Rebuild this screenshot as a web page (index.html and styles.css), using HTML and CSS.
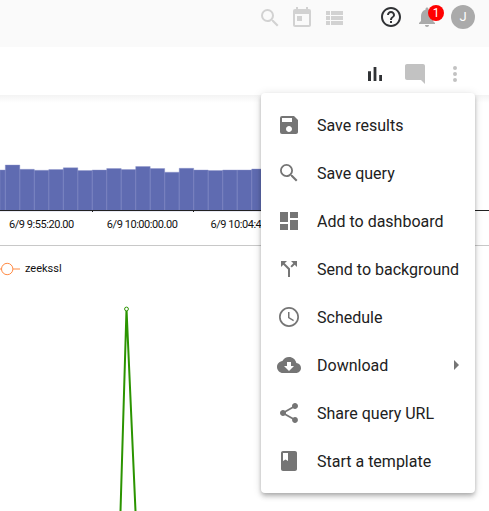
FILE: index.html
```html
<!DOCTYPE html>
<html lang="en">
<head>
<meta charset="utf-8">
<title>Query results</title>
<link rel="stylesheet" href="styles.css">
</head>
<body>
<header class="topbar">
  <svg class="icon faint" viewBox="0 0 24 24"><path d="M15.500 14h-.79l-.28-.27A6.471 6.471 0 0 0 16 9.500 6.500 6.500 0 1 0 9.500 16c1.610 0 3.090-.59 4.230-1.570l.27.28v.79l5 4.990L20.490 19zm-6 0a4.500 4.500 0 1 1 0-9 4.500 4.500 0 0 1 0 9z"/></svg>
  <svg class="icon faint cal" viewBox="0 0 24 24"><path d="M19 3h-1V1h-2v2H8V1H6v2H5a2 2 0 0 0-2 2v14c0 1.100.9 2 2 2h14c1.100 0 2-.9 2-2V5a2 2 0 0 0-2-2zm0 16H5V8h14zM7 10h5v5H7z"/></svg>
  <svg class="icon faint list" viewBox="0 0 24 24"><path d="M4 5h4v4H4zM9 5h12v4H9zM4 10h4v4H4zM9 10h12v4H9zM4 15h4v4H4zM9 15h12v4H9z"/></svg>
  <svg class="icon dark help" viewBox="0 0 24 24"><path d="M11 18h2v-2h-2v2zm1-16C6.480 2 2 6.480 2 12s4.480 10 10 10 10-4.480 10-10S17.520 2 12 2zm0 18c-4.410 0-8-3.590-8-8s3.590-8 8-8 8 3.590 8 8-3.590 8-8 8zm0-14c-2.210 0-4 1.790-4 4h2c0-1.100.9-2 2-2s2 .9 2 2c0 2-3 1.750-3 5h2c0-2.250 3-2.500 3-5 0-2.210-1.790-4-4-4z"/></svg>
  <div class="bell">
    <svg class="icon muted" viewBox="0 0 24 24"><path d="M12 22c1.100 0 2-.9 2-2h-4c0 1.100.89 2 2 2zm6-6v-5c0-3.070-1.640-5.640-4.500-6.320V4c0-.83-.67-1.500-1.500-1.500s-1.500.67-1.500 1.500v.68C7.630 5.360 6 7.920 6 11v5l-2 2v1h16v-1z"/></svg>
    <span class="badge">1</span>
  </div>
  <div class="avatar">J</div>
</header>
<nav class="toolbar">
  <svg class="icon dark" viewBox="0 0 24 24"><path d="M5 9.200h3V19H5zM10.600 5h2.800v14h-2.800zm5.600 8H19v6h-2.800z"/></svg>
  <svg class="icon comment" viewBox="0 0 24 24"><path d="M22 4c0-1.100-.9-2-2-2H4c-1.100 0-2 .9-2 2v12c0 1.100.9 2 2 2h14l4 4z"/></svg>
  <svg class="icon more" viewBox="0 0 24 24"><path d="M12 8a2 2 0 1 0 0-4 2 2 0 0 0 0 4zm0 2a2 2 0 1 0 0 4 2 2 0 0 0 0-4zm0 6a2 2 0 1 0 0 4 2 2 0 0 0 0-4z"/></svg>
</nav>
<main>
  <section class="timeline">
    <svg class="bars" viewBox="0 0 489 57">
      <g class="bar">
        <path d="M0 15h5.300v41H0zM5.300 10h14.500v46H5.300zM19.800 14.300h14.500V56H19.800zM34.300 15.300h14.500V56H34.300zM48.800 14.500h14.500V56H48.800zM63.300 12.800h14.500V56H63.300zM77.800 15.500h14.500V56H77.800zM92.200 15h14.500v41H92.200zM106.700 13.500h14.500V56h-14.500zM121.200 14.500h14.500V56h-14.500zM135.700 11.500h14.500V56h-14.500zM150.200 13.500h14.500V56h-14.500zM164.700 17.200h14.500V56h-14.500zM179.200 13.300h14.500V56h-14.500zM193.700 15h14.500v41h-14.500zM208.200 15.500h14.500V56h-14.500zM222.700 15h14.500v41h-14.500zM237.200 15h14.500v41h-14.500zM251.700 14h14.500v42h-14.500z"/>
      </g>
      <path class="axis" d="M0 55.500h489M92.500 56v1.500M193.500 56v1.500"/>
    </svg>
    <div class="ticks"><span>6/9 9:55:20.00</span><span>6/9 10:00:00.00</span><span>6/9 10:04:40.00</span></div>
  </section>
  <section class="series">
    <div class="legend">
      <svg class="marker" viewBox="0 0 20 14"><path d="M0 7h1.500M13 7h7"/><circle cx="7.200" cy="7" r="5.700"/></svg>
      <span>zeekssl</span>
    </div>
    <svg class="plot" viewBox="0 0 489 211"><path d="M120.500 211L126.500 9l9 202"/><circle cx="126.500" cy="9" r="1.900"/></svg>
  </section>
</main>
<ul class="menu">
  <li><svg class="icon" viewBox="0 0 24 24"><path d="M17 3H5a2 2 0 0 0-2 2v14a2 2 0 0 0 2 2h14c1.100 0 2-.9 2-2V7zm-5 16c-1.660 0-3-1.340-3-3s1.340-3 3-3 3 1.340 3 3-1.340 3-3 3zm3-10H5V5h10z"/></svg>Save results</li>
  <li><svg class="icon" viewBox="0 0 24 24"><path d="M15.500 14h-.79l-.28-.27A6.471 6.471 0 0 0 16 9.500 6.500 6.500 0 1 0 9.500 16c1.610 0 3.090-.59 4.230-1.570l.27.28v.79l5 4.990L20.490 19zm-6 .2a4.700 4.700 0 1 1 0-9.400 4.700 4.700 0 0 1 0 9.400z"/></svg>Save query</li>
  <li><svg class="icon" viewBox="0 0 24 24"><path d="M3 13h8V3H3zm0 8h8v-6H3zm10 0h8V11h-8zm0-18v6h8V3z"/></svg>Add to dashboard</li>
  <li><svg class="icon" viewBox="0 0 24 24"><path d="M14 4l2.290 2.290-2.880 2.880 1.420 1.420 2.880-2.880L20 10V4zM10 4H4v6l2.290-2.290 4.710 4.700V20h2v-8.410l-5.290-5.300z"/></svg>Send to background</li>
  <li><svg class="icon" viewBox="0 0 24 24"><path d="M11.990 2C6.470 2 2 6.480 2 12s4.470 10 9.990 10C17.520 22 22 17.520 22 12S17.520 2 11.990 2zM12 20.300a8.300 8.300 0 1 1 0-16.600 8.300 8.300 0 0 1 0 16.600zM12.500 7H11v6l5.250 3.150.75-1.230-4.500-2.670z"/></svg>Schedule</li>
  <li><svg class="icon" viewBox="0 0 24 24"><path d="M19.350 10.040C18.670 6.590 15.640 4 12 4 9.110 4 6.600 5.640 5.350 8.040 2.340 8.360 0 10.910 0 14c0 3.310 2.690 6 6 6h13c2.760 0 5-2.240 5-5 0-2.640-2.050-4.780-4.650-4.960zM17 13l-5 5-5-5h3V9h4v4z"/></svg>Download<i class="arrow"></i></li>
  <li><svg class="icon" viewBox="0 0 24 24"><path d="M18 16.080c-.76 0-1.440.3-1.960.77L8.910 12.700c.05-.23.09-.46.09-.7s-.04-.47-.09-.7l7.050-4.110c.54.5 1.250.81 2.040.81 1.660 0 3-1.340 3-3s-1.340-3-3-3-3 1.340-3 3c0 .24.04.47.09.7L8.040 9.810C7.500 9.310 6.790 9 6 9c-1.660 0-3 1.340-3 3s1.340 3 3 3c.79 0 1.500-.31 2.040-.81l7.120 4.160c-.05.21-.08.43-.08.65 0 1.610 1.310 2.920 2.920 2.920s2.920-1.310 2.920-2.920-1.310-2.920-2.920-2.920z"/></svg>Share query URL</li>
  <li><svg class="icon" viewBox="0 0 24 24"><path d="M18 2H6c-1.100 0-2 .9-2 2v16c0 1.100.9 2 2 2h12c1.100 0 2-.9 2-2V4c0-1.100-.9-2-2-2zM6 4h5v8l-2.500-1.500L6 12z"/></svg>Start a template</li>
</ul>
</body>
</html>
```
FILE: styles.css
```css
* { box-sizing: border-box; }
body {
  margin: 0;
  height: 511px;
  overflow: hidden;
  position: relative;
  background: #fff;
  color: #212121;
  font-family: Roboto, sans-serif;
}
svg { display: block; }
.icon { width: 24px; height: 24px; flex: none; fill: #757575; }
.icon.dark { fill: #303235; }
.icon.faint { fill: #d2d2d2; margin-top: 2px; }
.icon.muted { fill: #aaa; }
.icon.comment, .icon.more { margin-left: 16px; fill: #c2c2c2; }

.topbar {
  height: 47px;
  padding: 0 14px 13px 0;
  display: flex;
  align-items: center;
  justify-content: flex-end;
  background: #fafafa;
}
.cal { margin-left: 8px; }
.list { margin-left: 8px; }
.help { margin-left: 33px; }
.bell { position: relative; margin-left: 12px; }
.badge {
  position: absolute;
  left: 13px;
  top: 0;
  width: 16px;
  height: 16px;
  border-radius: 50%;
  background: #f00;
  color: #fff;
  font-size: 12px;
  line-height: 16px;
  text-align: center;
}
.avatar {
  width: 24px;
  height: 24px;
  margin-left: 12px;
  border-radius: 50%;
  background: #aaa;
  color: #fff;
  font-size: 13px;
  line-height: 24px;
  text-align: center;
}

.toolbar {
  height: 48px;
  padding: 5px 22px 0 0;
  display: flex;
  align-items: center;
  justify-content: flex-end;
}

main { height: 416px; background: linear-gradient(#f3f3f3, #fff 8px); }
.timeline { height: 151px; padding-top: 60px; border-bottom: 1px solid #c8c8c8; }
.bars { width: 489px; height: 57px; }
.bar { fill: #5f6bb1; stroke: #8d96cb; stroke-width: .4; }
.axis { stroke: #222; fill: none; }
.ticks {
  display: flex;
  gap: 33px;
  padding-left: 9px;
  margin-top: 6px;
  font-size: 11px;
  line-height: 13px;
  letter-spacing: -.45px;
  color: #111;
  white-space: nowrap;
}

.legend { height: 54px; padding-top: 15px; display: flex; gap: 5px; font-size: 11px; line-height: 16px; color: #111; }
.marker { width: 20px; height: 14px; margin-top: 1px; fill: #fff; stroke: #ff8b45; }
.plot { width: 489px; height: 211px; fill: none; stroke: #2b9400; stroke-width: 2; }
.plot circle { fill: #fff; stroke-width: 1; }

.menu {
  position: absolute;
  left: 261px;
  top: 93px;
  width: 214px;
  height: 400px;
  margin: 0;
  padding: 8px 0;
  list-style: none;
  background: #fff;
  border-radius: 4px;
  box-shadow: 0 2px 4px -1px rgba(0,0,0,.2), 0 4px 5px rgba(0,0,0,.14), 0 1px 10px rgba(0,0,0,.12);
}
.menu li { height: 48px; padding: 0 16px; display: flex; align-items: center; gap: 16px; font-size: 16px; white-space: nowrap; }
.arrow { margin-left: auto; border-left: 5px solid #757575; border-top: 5px solid transparent; border-bottom: 5px solid transparent; }
```
